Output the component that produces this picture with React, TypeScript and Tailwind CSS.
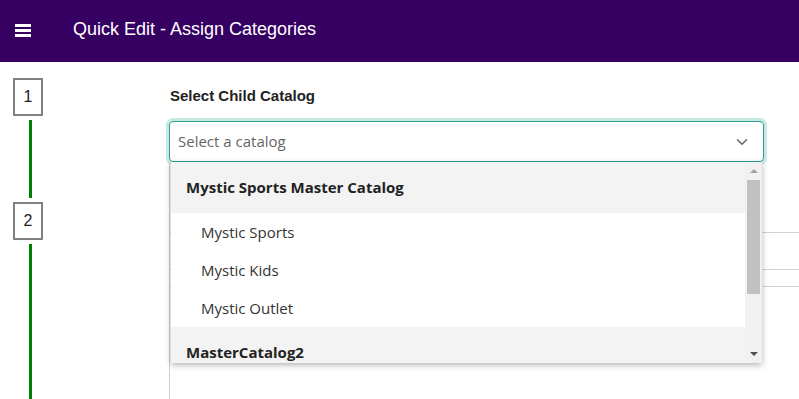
import { ChevronDown } from 'lucide-react'

const groups = [
  { name: 'Mystic Sports Master Catalog', items: ['Mystic Sports', 'Mystic Kids', 'Mystic Outlet'] },
  { name: 'MasterCatalog2', items: [] as string[] },
]

function StepBox({ n }: { n: number }) {
  return (
    <div className="w-[30px] h-[38px] border-2 border-[#808080] bg-white flex items-center justify-center text-[16px] text-[#222] font-['Liberation_Sans',Arial,sans-serif]">
      {n}
    </div>
  )
}

function Steps() {
  return (
    <div className="w-[169px] shrink-0 pl-[13px] pt-[16px] flex flex-col">
      <StepBox n={1} />
      <div className="ml-[16px] w-[3px] h-[78px] my-[4px] bg-[#008000]" />
      <StepBox n={2} />
      <div className="ml-[16px] w-[3px] h-[158px] mt-[4px] bg-[#008000]" />
    </div>
  )
}

function Dropdown() {
  return (
    <div className="absolute left-[2px] top-[41px] w-[591px] h-[201px] bg-white shadow-[0_2px_6px_rgba(0,0,0,0.3)] flex overflow-hidden font-['Open_Sans',sans-serif]">
      <div className="flex-1 flex flex-col">
        {groups.map((g) => (
          <div key={g.name}>
            <div className="h-[51px] bg-[#f3f3f3] pl-[15px] flex items-center text-[15px] font-bold text-[#222]">
              {g.name}
            </div>
            {g.items.map((it) => (
              <div key={it} className="h-[38px] pl-[30px] flex items-center text-[15px] text-[#333]">
                {it}
              </div>
            ))}
          </div>
        ))}
      </div>
      <div className="w-[17px] bg-[#f1f1f1] flex flex-col items-center">
        <div className="h-[18px] flex items-center justify-center">
          <div className="w-0 h-0 border-l-[4px] border-r-[4px] border-b-[4px] border-l-transparent border-r-transparent border-b-[#a3a3a3]" />
        </div>
        <div className="w-[13px] h-[114px] bg-[#c1c1c1]" />
        <div className="flex-1" />
        <div className="h-[18px] flex items-center justify-center">
          <div className="w-0 h-0 border-l-[4px] border-r-[4px] border-t-[4px] border-l-transparent border-r-transparent border-t-[#505050]" />
        </div>
      </div>
    </div>
  )
}

export default function App() {
  return (
    <div className="w-[799px] h-[399px] overflow-hidden bg-white flex flex-col">
      <header className="h-[62px] shrink-0 bg-[#360062] flex items-center">
        <div className="ml-[15px] flex flex-col gap-[2px] mt-[-2px]">
          <div className="w-[16px] h-[3px] bg-white" />
          <div className="w-[16px] h-[3px] bg-white" />
          <div className="w-[16px] h-[3px] bg-white" />
        </div>
        <h1 className="ml-[42px] mt-[-4px] text-white text-[18px] font-['Liberation_Sans',Arial,sans-serif]">
          Quick Edit - Assign Categories
        </h1>
      </header>
      <div className="flex flex-1">
        <Steps />
        <div className="flex-1 pt-[23px]">
          <label className="block pl-[1px] h-[36px] text-[15px] font-bold text-[#222] font-['Liberation_Sans',Arial,sans-serif]">
            Select Child Catalog
          </label>
          <div className="relative">
            <div className="w-[595px] h-[41px] border border-[#2a9d8f] rounded-[4px] shadow-[0_0_0_3px_#c7e8e3] flex items-center pl-[8px] pr-[12px] font-['Open_Sans',sans-serif]">
              <span className="flex-1 text-[15px] text-[#666]">Select a catalog</span>
              <ChevronDown className="w-[18px] h-[18px] text-[#666]" strokeWidth={2} />
            </div>
            <div className="border-l border-[#cfcfcf] h-[240px] flex flex-col">
              <div className="h-[71px] border-b border-[#d0d4d8]" />
              <div className="h-[37px] border-b border-[#d0d4d8]" />
              <div className="h-[17px] border-b border-[#d0d4d8]" />
            </div>
            <Dropdown />
          </div>
        </div>
      </div>
    </div>
  )
}
